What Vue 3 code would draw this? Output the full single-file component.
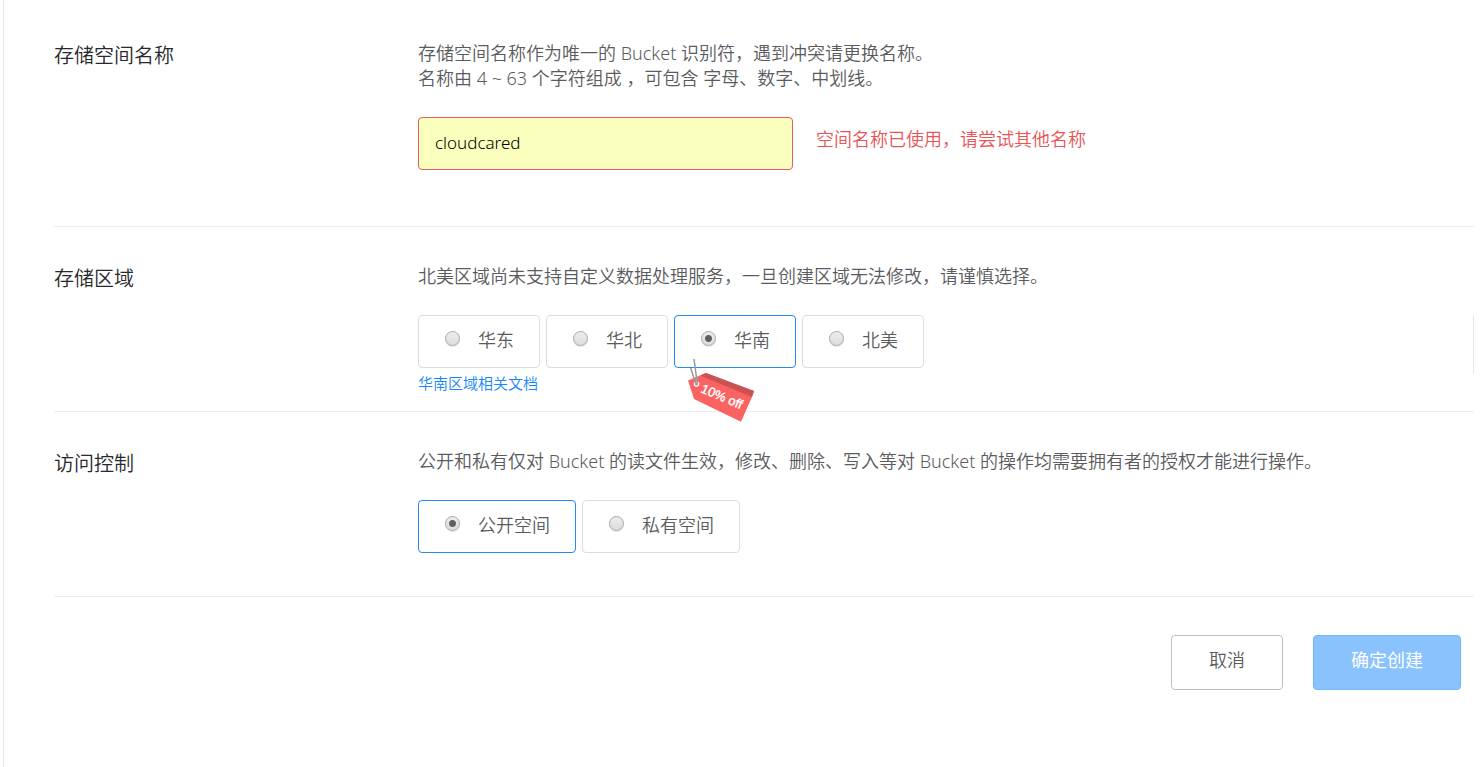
<script setup>
import { ref } from 'vue'

const name = ref('cloudcared')
const region = ref('south')
const access = ref('public')

const regions = [
  { id: 'east', label: '华东' },
  { id: 'north', label: '华北' },
  { id: 'south', label: '华南', tag: '10% off' },
  { id: 'america', label: '北美' }
]
const accesses = [
  { id: 'public', label: '公开空间' },
  { id: 'private', label: '私有空间' }
]
</script>

<template>
  <main class="page" lang="zh-CN">
    <form class="form" @submit.prevent>
      <section class="row row-name">
        <label class="title" for="bucket-name">存储空间名称</label>
        <div class="body">
          <p class="desc">存储空间名称作为唯一的 Bucket 识别符，遇到冲突请更换名称。<br>名称由 4 ~ 63 个字符组成 ，可包含 字母、数字、中划线。</p>
          <div class="field">
            <input id="bucket-name" v-model="name" class="text" type="text" aria-describedby="name-error">
            <span id="name-error" class="error">空间名称已使用，请尝试其他名称</span>
          </div>
        </div>
      </section>

      <section class="row row-region">
        <h2 id="region-title" class="title">存储区域</h2>
        <div class="body">
          <p class="desc">北美区域尚未支持自定义数据处理服务，一旦创建区域无法修改，请谨慎选择。</p>
          <div class="options" role="radiogroup" aria-labelledby="region-title">
            <label v-for="r in regions" :key="r.id" class="option" :class="{ active: region === r.id }">
              <input v-model="region" class="radio" type="radio" name="region" :value="r.id">
              <span>{{ r.label }}</span>
              <svg v-if="r.tag" class="tag" width="72" height="70" viewBox="0 0 72 70" aria-hidden="true">
                <path d="M2 26.5 20 19 68 37 65.500 44 55 67.700 8 45Z" fill="#fb6362" />
                <path d="M20 19 68 37 66 43 14 21.500Z" fill="#cb5253" />
                <circle cx="10.500" cy="30" r="2.800" fill="#fff" />
                <path d="M4.700 14 9.700 29.500M8 5 11.300 29.500" fill="none" stroke="#999" stroke-width="1.500" />
                <circle cx="10.500" cy="30" r="1.500" fill="#999" />
                <text x="14" y="38" transform="rotate(23 14 38)" class="tag-text">{{ r.tag }}</text>
              </svg>
            </label>
          </div>
          <a class="doc" href="#">华南区域相关文档</a>
        </div>
        <span class="edge"></span>
      </section>

      <section class="row row-access">
        <h2 id="access-title" class="title">访问控制</h2>
        <div class="body">
          <p class="desc">公开和私有仅对 Bucket 的读文件生效，修改、删除、写入等对 Bucket 的操作均需要拥有者的授权才能进行操作。</p>
          <div class="options" role="radiogroup" aria-labelledby="access-title">
            <label v-for="a in accesses" :key="a.id" class="option" :class="{ active: access === a.id }">
              <input v-model="access" class="radio" type="radio" name="access" :value="a.id">
              <span>{{ a.label }}</span>
            </label>
          </div>
        </div>
      </section>

      <footer class="actions">
        <button class="btn" type="button">取消</button>
        <button class="btn primary" type="submit">确定创建</button>
      </footer>
    </form>
  </main>
</template>

<style>
body {
  margin: 0;
  background: #fff;
}
</style>

<style scoped>
.page {
  box-sizing: border-box;
  min-height: 100vh;
  margin-left: 3px;
  padding: 4px 7px 0 50px;
  border-left: 1px solid #e3e3e3;
  background: #fff;
  color: #5a5b5e;
  font-family: "Noto Sans", "Noto Sans CJK SC", sans-serif;
  font-size: 18px;
  font-weight: 350;
  line-height: 25px;
}
.row {
  position: relative;
  display: flex;
  padding: 37px 0 43px;
  border-bottom: 1px solid #ececee;
}
.row-name { padding-bottom: 56px; }
.row-region { padding-bottom: 15px; }
.title {
  flex: 0 0 364px;
  margin: 0;
  padding-top: 1px;
  color: #28292c;
  font-size: 20px;
  font-weight: 350;
  line-height: 27px;
}
.body {
  flex: 1;
  min-width: 0;
}
.desc { margin: 0 0 26px; }
.field {
  display: flex;
  gap: 23px;
}
.text {
  box-sizing: border-box;
  width: 375px;
  height: 53px;
  padding: 0 16px 2px;
  border: 1px solid #e85b5b;
  border-radius: 4px;
  background: #faffbd;
  color: #000;
  font: inherit;
  font-size: 17px;
  outline: none;
}
.error {
  padding-top: 10px;
  color: #e85355;
}
.options {
  display: flex;
  gap: 6px;
}
.option {
  position: relative;
  box-sizing: border-box;
  display: flex;
  align-items: center;
  gap: 18px;
  height: 53px;
  padding: 0 25px 2px 26px;
  border: 1px solid #dcdde3;
  border-radius: 4px;
}
.option.active { border-color: #2189f3; }
.radio {
  box-sizing: border-box;
  width: 15px;
  height: 15px;
  margin: 0 0 4px;
  appearance: none;
  border: 1px solid #a9a9a9;
  border-radius: 50%;
  background: linear-gradient(#ededed, #dcdcdc);
  box-shadow: 0 1px 1px #e2e2e2;
}
.radio:checked {
  background: radial-gradient(circle, #606060 3px, transparent 4px), linear-gradient(#ededed, #dcdcdc);
}
.tag {
  position: absolute;
  top: 38px;
  left: 11px;
  z-index: 1;
}
.tag-text {
  fill: #fff;
  stroke: #fff;
  stroke-width: 0.4px;
  font-family: "Liberation Sans", Arial, sans-serif;
  font-size: 13px;
  font-weight: 400;
}
.doc {
  display: block;
  width: max-content;
  margin-top: 3px;
  color: #1787fb;
  font-size: 15px;
  text-decoration: none;
}
.edge {
  position: absolute;
  top: 88px;
  right: 0;
  width: 1px;
  height: 59px;
  background: #e6e6e6;
}
.actions {
  display: flex;
  justify-content: flex-end;
  gap: 30px;
  padding: 38px 13px 77px 0;
}
.btn {
  height: 55px;
  padding: 0 37px 4px;
  border: 1px solid #bfbfbf;
  border-radius: 4px;
  background: #fff;
  color: #5a5b5e;
  font: inherit;
}
.primary {
  border-color: #74b6fb;
  background: #89c2fd;
  color: #fff;
  font-weight: 400;
}
</style>
